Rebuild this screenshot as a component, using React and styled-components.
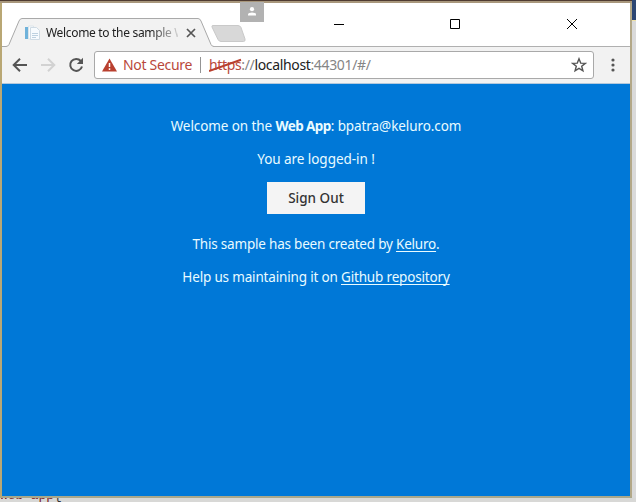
import React from "react";
import styled, { createGlobalStyle } from "styled-components";

const Global = createGlobalStyle`
  * { box-sizing: border-box; }
  html, body { margin: 0; padding: 0; overflow: hidden; }
`;

const Desktop = styled.div`
  width: 636px;
  height: 502px;
  display: grid;
  grid-template-columns: 632px 4px;
  grid-template-rows: 498px 4px;
  background: #dfdfdd;
  overflow: hidden;
  font-family: "Noto Sans", "Open Sans", sans-serif;
`;

const Window = styled.div`
  display: flex;
  flex-direction: column;
  border: 2px solid #b9a774;
  border-top: 0;
  border-right-color: #b3a888;
  border-bottom-color: #a9a88c;
  background: #fff;
  &::before {
    content: "";
    height: 3px;
    flex: none;
    margin: 0 -2px;
    background: linear-gradient(#4f3b31 1px, #a8977c 1px);
  }
`;

const EdgeStrip = styled.div`
  background: #dadada;
  &::before {
    content: "";
    display: block;
    height: 20px;
    background: #2c4673;
    border-bottom: 1px solid #efe2a8;
  }
`;

const CodeStrip = styled.div`
  grid-column: 1 / 3;
  height: 4px;
  overflow: hidden;
  display: flex;
  align-items: flex-end;
  background: #d8d8d6;
`;

const Code = styled.span`
  font: 13px/16px "Liberation Mono", monospace;
  letter-spacing: -0.1px;
  color: #7c2323;
  margin-bottom: -2px;
  b { color: #333; font-weight: 400; }
`;

const TitleBar = styled.div`
  height: 44px;
  display: flex;
  align-items: flex-start;
  position: relative;
  flex: none;
  background: #fff;
  box-shadow: inset 0 -1px 0 #b0b0b0;
`;

const Tab = styled.div`
  position: relative;
  width: 213px;
  height: 29px;
  margin-top: 15px;
  padding: 1px 0 0 22px;
  display: flex;
  align-items: center;
  flex: none;
`;

const TabShape = styled.svg`
  position: absolute;
  left: 0;
  top: 0;
`;

const Favicon = styled.svg`
  position: relative;
  flex: none;
`;

const TabTitle = styled.span`
  position: relative;
  margin-left: 6px;
  width: 132px;
  overflow: hidden;
  white-space: nowrap;
  font-size: 12px;
  line-height: 18px;
  letter-spacing: -0.32px;
  color: #222;
  mask-image: linear-gradient(90deg, #000 105px, transparent 137px);
`;

const TabClose = styled.svg`
  position: relative;
  margin-left: 8px;
  flex: none;
`;

const NewTab = styled.svg`
  margin: 21px 0 0 -4px;
  flex: none;
`;

const ProfileBadge = styled.div`
  position: absolute;
  left: 238px;
  top: -1px;
  width: 24px;
  height: 20px;
  background: #b2b2b2;
  display: flex;
  justify-content: center;
  padding-top: 5px;
`;

const WindowControls = styled.div`
  display: flex;
  margin: 15px 52px 0 auto;
  gap: 105px;
`;

const Toolbar = styled.div`
  height: 37px;
  flex: none;
  display: flex;
  align-items: center;
  padding: 0 9px;
  background: #f2f2f2;
  border-bottom: 1px solid #b3c8dc;
`;

const Icon = styled.svg`
  display: block;
  flex: none;
  margin-left: ${(p) => p.$left || 0}px;
`;

const AddressBar = styled.div`
  width: 500px;
  height: 28px;
  margin-left: 9px;
  display: flex;
  align-items: center;
  padding: 0 6px 0 7px;
  background: #fff;
  border: 1px solid #a9a9a9;
  border-radius: 3px;
  font-size: 14px;
  line-height: 20px;
  white-space: nowrap;
`;

const Warning = styled.span`
  margin-left: 6px;
  width: 69px;
  color: #b9483b;
  letter-spacing: -0.3px;
`;

const Divider = styled.span`
  width: 1px;
  height: 16px;
  margin: 0 8px;
  background: #949494;
`;

const Scheme = styled.span`
  position: relative;
  color: #b9483b;
  svg { position: absolute; left: 0; top: 3px; }
`;

const Url = styled.span`
  flex: 1;
  color: #858585;
  letter-spacing: ${(p) => p.$tracking}px;
  b { font-weight: 400; color: #222; }
`;

const Page = styled.main`
  flex: 1;
  display: flex;
  flex-direction: column;
  align-items: center;
  padding: 26px 0 0;
  background: #0078d7;
  color: #e9fbff;
`;

const Line = styled.p`
  margin: 0;
  height: 33px;
  font-size: 13.5px;
  line-height: 33px;
  white-space: nowrap;
  letter-spacing: ${(p) => p.$tracking}px;
`;

const Bold = styled.b`
  font-weight: 700;
  letter-spacing: ${(p) => p.$tracking}px;
`;

const Link = styled.a`
  color: inherit;
  text-decoration: underline;
  text-underline-offset: 2px;
  text-decoration-thickness: 1px;
  text-decoration-skip-ink: none;
`;

const SignOut = styled.button`
  width: 98px;
  height: 32px;
  margin: 6px 0 14px;
  padding: 0 0 1px;
  border: 0;
  background: #f4f4f4;
  color: #333;
  font: 500 13.5px/30px "Noto Sans", sans-serif;
  letter-spacing: 0;
`;

export default function App() {
  return (
    <Desktop>
      <Global />
      <Window>
        <TitleBar>
          <Tab>
            <TabShape width="213" height="29" viewBox="0 0 213 29">
              <path d="M0 28.5H4Q6 28.5 7 26.5L17 3Q18 .5 20 .5H196Q198 .5 199 3L209 26.5Q210 28.5 212 28.5V29H0Z" fill="#f2f2f2" />
              <path d="M0 28.5H4Q6 28.5 7 26.5L17 3Q18 .5 20 .5H196Q198 .5 199 3L209 26.5Q210 28.5 212 28.5" fill="none" stroke="#a9a9a9" />
            </TabShape>
            <Favicon width="16" height="16" viewBox="0 0 16 16">
              <path d="M1 2h3v12H1z" fill="#6fb2da" />
              <path d="M4.500 1h5v13h-5z" fill="#f8fbfc" stroke="#dbe4ea" />
              <path d="M6.500 2.500h6l3 3v9h-9z" fill="#f7fbfe" stroke="#cfdbe4" />
              <path d="M8 8.500h6M8 10.500h6M8 12.500h4" stroke="#bdd1e0" />
            </Favicon>
            <TabTitle>Welcome to the sample Web App</TabTitle>
            <TabClose width="10" height="10" viewBox="0 0 10 10">
              <path d="M1 1l8 8M9 1L1 9" stroke="#555" strokeWidth="1.7" />
            </TabClose>
          </Tab>
          <NewTab width="36" height="19" viewBox="0 0 36 19">
            <path d="M2 1.5H27Q29 1.5 30 3.5L34 15Q34.5 17.5 32.500 17.5H10Q8 17.5 7 15.5L1 3Q.5 1.5 2 1.5Z" fill="#d8d8d8" stroke="#c9c9c9" />
          </NewTab>
          <ProfileBadge>
            <svg width="10" height="9" viewBox="0 0 10 9">
              <circle cx="5" cy="2.2" r="2.1" fill="#fff" />
              <path d="M1 8.5V7.2Q1.5 5.4 5 5.4T9 7.2V8.5Z" fill="#fff" />
            </svg>
          </ProfileBadge>
          <WindowControls>
            <svg width="12" height="12" viewBox="0 0 12 12"><path d="M2 6.5h10" stroke="#000" /></svg>
            <svg width="12" height="12" viewBox="0 0 12 12"><path d="M1.5 1.5h9v9h-9z" fill="none" stroke="#000" /></svg>
            <svg width="12" height="12" viewBox="0 0 12 12"><path d="M1 1l10 10M11 1L1 11" stroke="#000" strokeWidth="1" /></svg>
          </WindowControls>
        </TitleBar>
        <Toolbar>
          <Icon width="18" height="16" viewBox="0 0 18 16">
            <path d="M16 8H3M9 1.7L2.7 8L9 14.3" fill="none" stroke="#555" strokeWidth="2" />
          </Icon>
          <Icon $left={11} width="18" height="16" viewBox="0 0 18 16">
            <path d="M1 8H14M8 1.7L14.3 8L8 14.3" fill="none" stroke="#d2d2d2" strokeWidth="2" />
          </Icon>
          <Icon $left={9} width="18" height="16" viewBox="0 0 18 16">
            <path d="M13.8 4A6 6 0 1 0 15 9.5" fill="none" stroke="#555" strokeWidth="2" />
            <path d="M16 .8V7H9.8Z" fill="#555" />
          </Icon>
          <AddressBar>
            <Icon width="15" height="14" viewBox="0 0 15 14">
              <path d="M7.5 .5L15 13.5H0Z" fill="#b9402f" />
              <path d="M7.5 5v4M7.5 10.2v1.7" stroke="#fff" strokeWidth="1.5" />
            </Icon>
            <Warning>Not Secure</Warning>
            <Divider />
            <Url $tracking={-0.35}>
              <Scheme>
                https
                <svg width="34" height="15" viewBox="0 0 34 15">
                  <path d="M0 13L32 1.8" stroke="#b9402f" strokeWidth="2" />
                </svg>
              </Scheme>
              ://<b>localhost</b>:44301/#/
            </Url>
            <Icon width="16" height="16" viewBox="0 0 16 16">
              <path d="M8 1.8L9.7 6.1L14.3 6.4L10.7 9.3L11.9 13.8L8 11.3L4.1 13.8L5.3 9.3L1.7 6.4L6.3 6.1Z" fill="none" stroke="#555" strokeWidth="1.4" />
            </Icon>
          </AddressBar>
          <Icon $left={17} width="4" height="14" viewBox="0 0 4 14">
            <circle cx="2" cy="2" r="1.6" fill="#555" />
            <circle cx="2" cy="7" r="1.6" fill="#555" />
            <circle cx="2" cy="12" r="1.6" fill="#555" />
          </Icon>
        </Toolbar>
        <Page>
          <Line $tracking={-0.08}>
            Welcome on the <Bold $tracking={-0.6}>Web App</Bold>: bpatra@keluro.com
          </Line>
          <Line $tracking={-0.05}>You are logged-in !</Line>
          <SignOut>Sign Out</SignOut>
          <Line $tracking={-0.2}>
            This sample has been created by <Link>Keluro</Link>.
          </Line>
          <Line $tracking={-0.17}>
            Help us maintaining it on <Link>Github repository</Link>
          </Line>
        </Page>
      </Window>
      <EdgeStrip />
      <CodeStrip>
        <Code>web-app<b>{"{"}</b></Code>
      </CodeStrip>
    </Desktop>
  );
}
